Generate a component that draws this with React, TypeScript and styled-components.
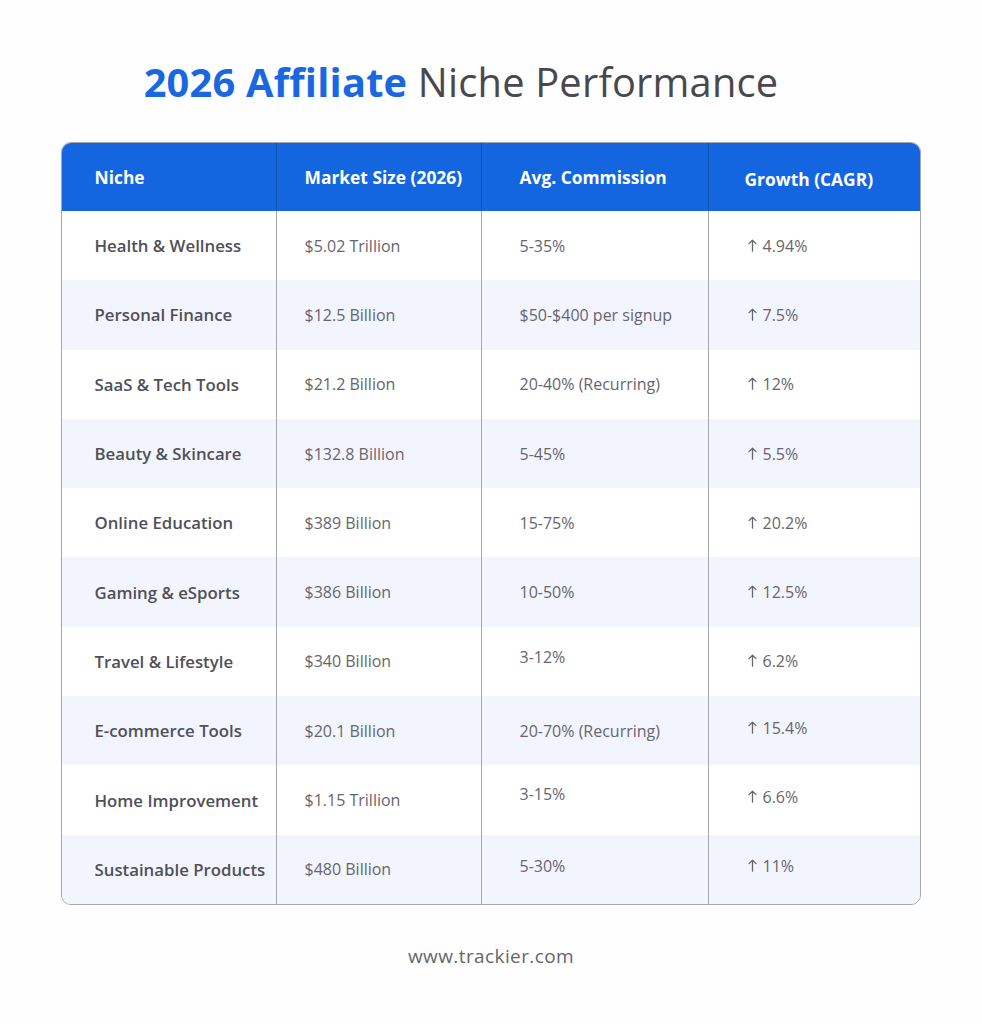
import styled, { createGlobalStyle } from 'styled-components';

const GlobalStyle = createGlobalStyle`
  body {
    margin: 0;
    background: #fefefe;
    font-family: 'Open Sans', 'Noto Sans', sans-serif;
  }
`;

const Page = styled.div`
  width: 982px;
  height: 1024px;
  display: flex;
  flex-direction: column;
  align-items: center;
`;

const Title = styled.h1`
  margin: 54px 0 0 -60px;
  font-size: 39.8px;
  font-weight: 400;
  color: #48484d;
  letter-spacing: 0.2px;
  line-height: 56px;
  span {
    color: #1a68e0;
    font-weight: 700;
  }
`;

const Table = styled.div`
  margin-top: 32px;
  margin-left: -1px;
  width: 858px;
  border: 1px solid #a4a6b0;
  border-radius: 10px;
  overflow: hidden;
  display: grid;
  grid-template-columns: 214px 205px 227px 1fr;
`;

const HeadCell = styled.div<{ $pl: number; $dy?: number }>`
  background: #1466e0;
  height: 68px;
  display: flex;
  align-items: center;
  padding-left: ${(p) => p.$pl}px;
  padding-top: ${(p) => (p.$dy ?? 0) * 2}px;
  box-sizing: border-box;
  color: #fff;
  font-weight: 700;
  font-size: 17.4px;
  border-left: ${(p) => (p.$pl === 33 ? 'none' : '1px solid #0f4fb0')};
`;

const Cell = styled.div<{ $alt: boolean; $first?: boolean; $pl: number; $dy?: number }>`
  background: ${(p) => (p.$alt ? '#f3f5fe' : '#ffffff')};
  height: 69.3px;
  display: flex;
  align-items: center;
  box-sizing: border-box;
  padding-left: ${(p) => p.$pl}px;
  padding-bottom: ${(p) => (p.$dy ?? 0) * -2}px;
  border-left: ${(p) => (p.$first ? 'none' : '1px solid #a4a6b0')};
  color: ${(p) => (p.$first ? '#505058' : '#66666d')};
  font-weight: ${(p) => (p.$first ? 600 : 400)};
  font-size: ${(p) => (p.$first ? '16.8px' : '16px')};
`;

const Arrow = styled.svg`
  width: 9px;
  height: 13px;
  margin-right: 6px;
  margin-bottom: 1px;
  flex-shrink: 0;
`;

const Footer = styled.div`
  margin-top: 38px;
  font-size: 19px;
  color: #66666c;
  letter-spacing: 0.4px;
`;

const UpArrow = () => (
  <Arrow viewBox="0 0 9 13" fill="none" stroke="#66666d" strokeWidth="1.3" strokeLinecap="round" strokeLinejoin="round">
    <path d="M4.5 12.2V1.2M1 4.6l3.5-3.4L8 4.6" />
  </Arrow>
);

const rows: [string, string, string, string, number?, number?][] = [
  ['Health & Wellness', '$5.02 Trillion', '5-35%', '4.94%'],
  ['Personal Finance', '$12.5 Billion', '$50-$400 per signup', '7.5%'],
  ['SaaS & Tech Tools', '$21.2 Billion', '20-40% (Recurring)', '12%'],
  ['Beauty & Skincare', '$132.8 Billion', '5-45%', '5.5%'],
  ['Online Education', '$389 Billion', '15-75%', '20.2%'],
  ['Gaming & eSports', '$386 Billion', '10-50%', '12.5%'],
  ['Travel & Lifestyle', '$340 Billion', '3-12%', '6.2%', -4, 0],
  ['E-commerce Tools', '$20.1 Billion', '20-70% (Recurring)', '15.4%', 0, -3],
  ['Home Improvement', '$1.15 Trillion', '3-15%', '6.6%', -6, -3],
  ['Sustainable Products', '$480 Billion', '5-30%', '11%', -3, -3],
];

export default function App() {
  return (
    <Page>
      <GlobalStyle />
      <Title>
        <span>2026 Affiliate</span> Niche Performance
      </Title>
      <Table>
        <HeadCell $pl={33} $dy={-3}>Niche</HeadCell>
        <HeadCell $pl={28} $dy={-3}>Market Size (2026)</HeadCell>
        <HeadCell $pl={38} $dy={-3}>Avg. Commission</HeadCell>
        <HeadCell $pl={36} $dy={2}>Growth (CAGR)</HeadCell>
        {rows.map(([niche, size, comm, growth, dc, dg], i) => {
          const alt = i % 2 === 1;
          return [
            <Cell key={`${i}a`} $alt={alt} $first $pl={33}>{niche}</Cell>,
            <Cell key={`${i}b`} $alt={alt} $pl={28} $dy={1}>{size}</Cell>,
            <Cell key={`${i}c`} $alt={alt} $pl={38} $dy={dc}>{comm}</Cell>,
            <Cell key={`${i}d`} $alt={alt} $pl={39} $dy={dg}>
              <UpArrow />
              {growth}
            </Cell>,
          ];
        })}
      </Table>
      <Footer>www.trackier.com</Footer>
    </Page>
  );
}
